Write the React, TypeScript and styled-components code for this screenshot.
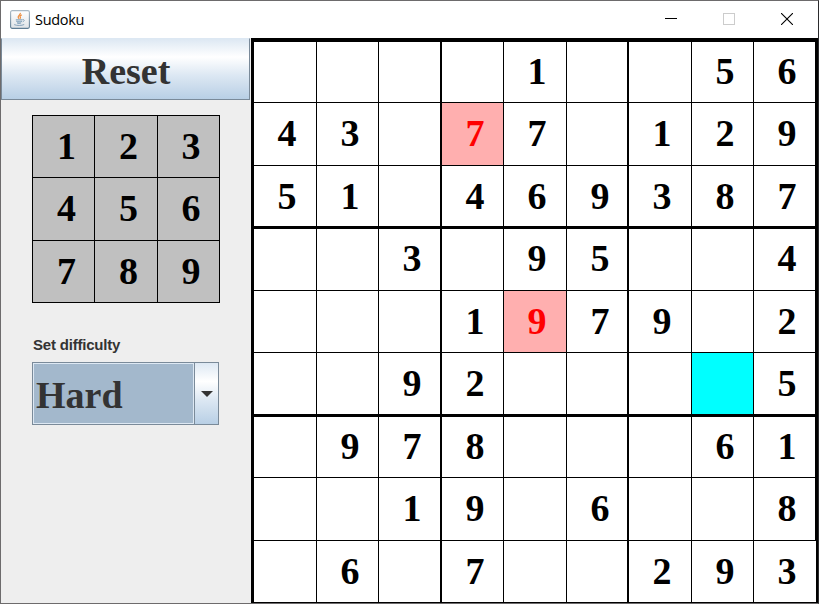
import React from "react";
import styled, { createGlobalStyle } from "styled-components";

const GlobalStyle = createGlobalStyle`
  *, *::before, *::after { box-sizing: border-box; }
  body { margin: 0; background: #fff; overflow: hidden; }
`;

const oceanGradient =
  "linear-gradient(180deg, #dde8f3 0%, #ffffff 30%, #dde8f3 60%, #b8cfe5 100%)";
const serif = '"Liberation Serif", "Times New Roman", serif';

const Window = styled.div`
  width: 819px;
  height: 604px;
  display: flex;
  flex-direction: column;
  background: #fff;
  border: 1px solid #6d6b6c;
  border-right-color: #2b2b2d;
`;

const TitleBar = styled.header`
  height: 37px;
  flex: none;
  display: flex;
  align-items: center;
  padding: 0 2px 0 9px;
`;

const Title = styled.h1`
  flex: 1;
  margin: 0 0 0 5px;
  font: 400 14.5px/20px "Open Sans", sans-serif;
  letter-spacing: -0.3px;
  color: #000;
`;

const Controls = styled.div`
  display: flex;
  align-items: center;
  height: 37px;
`;

const ControlButton = styled.button`
  width: 58px;
  height: 37px;
  padding: 0 0 1px;
  border: 0;
  background: none;
  display: grid;
  place-items: center;
`;

const Content = styled.main`
  flex: 1;
  min-height: 0;
  display: flex;
`;

const Sidebar = styled.aside`
  width: 250px;
  background: #eeeeee;
  display: flex;
  flex-direction: column;
  align-items: flex-start;
`;

const ResetButton = styled.button`
  width: 249px;
  height: 62px;
  padding: 3px 0 0 1px;
  border: 1px solid #7a8a99;
  border-top-color: #dde8f3;
  background: ${oceanGradient};
  font: 700 38px/50px ${serif};
  color: #333;
`;

const Keypad = styled.div`
  margin: 15px 0 0 31px;
  display: grid;
  grid-template-columns: 62px 63px 61px;
  grid-template-rows: 62px 63px 61px;
  border: 1px solid #000;
`;

const Key = styled.button<{ $last: boolean; $bottom: boolean }>`
  padding: 11px 0 0 ${(p) => (p.$last ? 23.5 : 24)}px;
  border: 0 solid #000;
  border-right-width: ${(p) => (p.$last ? 0 : 1)}px;
  border-bottom-width: ${(p) => (p.$bottom ? 0 : 1)}px;
  background: #c0c0c0;
  display: flex;
  align-items: flex-start;
  font: 700 38px/38px ${serif};
  color: #000;
`;

const Label = styled.label`
  margin: 33px 0 0 32px;
  height: 18px;
  font: 700 15px/18px "Liberation Sans", Arial, sans-serif;
  letter-spacing: -0.2px;
  color: #333;
`;

const Combo = styled.div`
  margin: 8px 0 0 31px;
  width: 187px;
  height: 63px;
  display: flex;
  border: 1px solid #7a8a99;
`;

const ComboValue = styled.div`
  width: 161px;
  border: 1px solid #dde8f3;
  padding: 6px 0 0 2px;
  background: #a3b8cc;
  font: 700 38px/50px ${serif};
  color: #333;
`;

const ComboArrow = styled.div`
  flex: 1;
  border-left: 1px solid #7a8a99;
  background: ${oceanGradient};
  display: grid;
  place-items: center;
`;

const Board = styled.section`
  display: grid;
  grid-template-columns: 63px 62px 63px 62px 63px 62px 63px 62px 61px;
  grid-template-rows: 61px 63px 63px 62px 62px 64px 61px 63px 62px;
  border: solid #000;
  border-width: 4px 3px 0 3px;
`;

type Tone = "plain" | "conflict" | "selected";
const fills: Record<Tone, string> = {
  plain: "#ffffff",
  conflict: "#ffafaf",
  selected: "#00ffff",
};

const Cell = styled.div<{ $row: number; $col: number; $tone: Tone }>`
  padding: ${(p) => (p.$row % 3 === 0 ? 10 : 11)}px 0 0 23.6px;
  border: 0 solid #000;
  border-right-width: ${(p) => (p.$col === 8 ? 0 : p.$col % 3 === 2 ? 2 : 1)}px;
  border-bottom-width: ${(p) => (p.$row !== 8 && p.$row % 3 === 2 ? 3 : 1)}px;
  margin-right: ${(p) => (p.$row === 8 && p.$col === 8 ? -1 : 0)}px;
  background: ${(p) => fills[p.$tone]};
  font: 700 38px/38px ${serif};
  color: ${(p) => (p.$tone === "conflict" ? "#ff0000" : "#000")};
`;

const puzzle = [
  "....1..56",
  "43.77.129",
  "51.469387",
  "..3.95..4",
  "...1979.2",
  "..92....5",
  ".978...61",
  "..19.6..8",
  ".6.7..293",
];

const toneAt = (row: number, col: number): Tone => {
  if ((row === 1 && col === 3) || (row === 4 && col === 4)) return "conflict";
  return row === 5 && col === 7 ? "selected" : "plain";
};

const JavaIcon = () => (
  <svg width="20" height="19" viewBox="0 0 20 19" fill="none">
    <defs>
      <linearGradient id="tile" x1="0" y1="0" x2="0" y2="1">
        <stop offset="0" stopColor="#ffffff" />
        <stop offset="1" stopColor="#dfe3e7" />
      </linearGradient>
      <linearGradient id="edge" x1="0" y1="0" x2="0" y2="1">
        <stop offset="0" stopColor="#a9b8c4" />
        <stop offset="1" stopColor="#5f7d94" />
      </linearGradient>
    </defs>
    <rect x="0.6" y="0.6" width="18.8" height="17.8" rx="1.6" fill="url(#tile)" stroke="url(#edge)" strokeWidth="1.1" />
    <path d="M10.3 2.9c.7 1.8-2.7 2.6-2.1 4.4.2.7.7 1 1 1.4M11.7 4.9c-1.6.7-2.2 1.4-1.4 2.3.5.6.1 1-.3 1.5" stroke="#ee8b3a" strokeWidth="1.2" />
    <path d="M5.8 9.9h6.6M6.4 11.4c1.4.6 4 .6 5.4 0M7 12.9c1.2.5 2.9.5 4.2 0" stroke="#6d93b1" strokeWidth="1" />
    <path d="M12.6 9.6c2-.5 2.2 1.6.1 2.2M4.2 14.6c2.6 1.2 7.6 1.1 10-.1" stroke="#7a9ab4" strokeWidth="0.9" />
  </svg>
);

export default function App() {
  return (
    <>
      <GlobalStyle />
      <Window>
        <TitleBar>
          <JavaIcon />
          <Title>Sudoku</Title>
          <Controls>
            <ControlButton aria-label="Minimize">
              <svg width="12" height="12" shapeRendering="crispEdges">
                <path d="M0 5.5h12" stroke="#000" />
              </svg>
            </ControlButton>
            <ControlButton aria-label="Maximize">
              <svg width="12" height="12" shapeRendering="crispEdges">
                <rect x="0.5" y="0.5" width="11" height="11" fill="none" stroke="#ccc" />
              </svg>
            </ControlButton>
            <ControlButton aria-label="Close">
              <svg width="12" height="12">
                <path d="M0 0l12 12M12 0L0 12" stroke="#000" strokeWidth="1.1" />
              </svg>
            </ControlButton>
          </Controls>
        </TitleBar>
        <Content>
          <Sidebar>
            <ResetButton>Reset</ResetButton>
            <Keypad>
              {[1, 2, 3, 4, 5, 6, 7, 8, 9].map((n) => (
                <Key key={n} $last={n % 3 === 0} $bottom={n > 6}>
                  {n}
                </Key>
              ))}
            </Keypad>
            <Label>Set difficulty</Label>
            <Combo>
              <ComboValue>Hard</ComboValue>
              <ComboArrow>
                <svg width="12" height="6">
                  <path d="M0 0h12L6 6z" fill="#333" />
                </svg>
              </ComboArrow>
            </Combo>
          </Sidebar>
          <Board>
            {puzzle.flatMap((line, row) =>
              [...line].map((digit, col) => (
                <Cell key={`${row}-${col}`} $row={row} $col={col} $tone={toneAt(row, col)}>
                  {digit === "." ? "" : digit}
                </Cell>
              )),
            )}
          </Board>
        </Content>
      </Window>
    </>
  );
}
